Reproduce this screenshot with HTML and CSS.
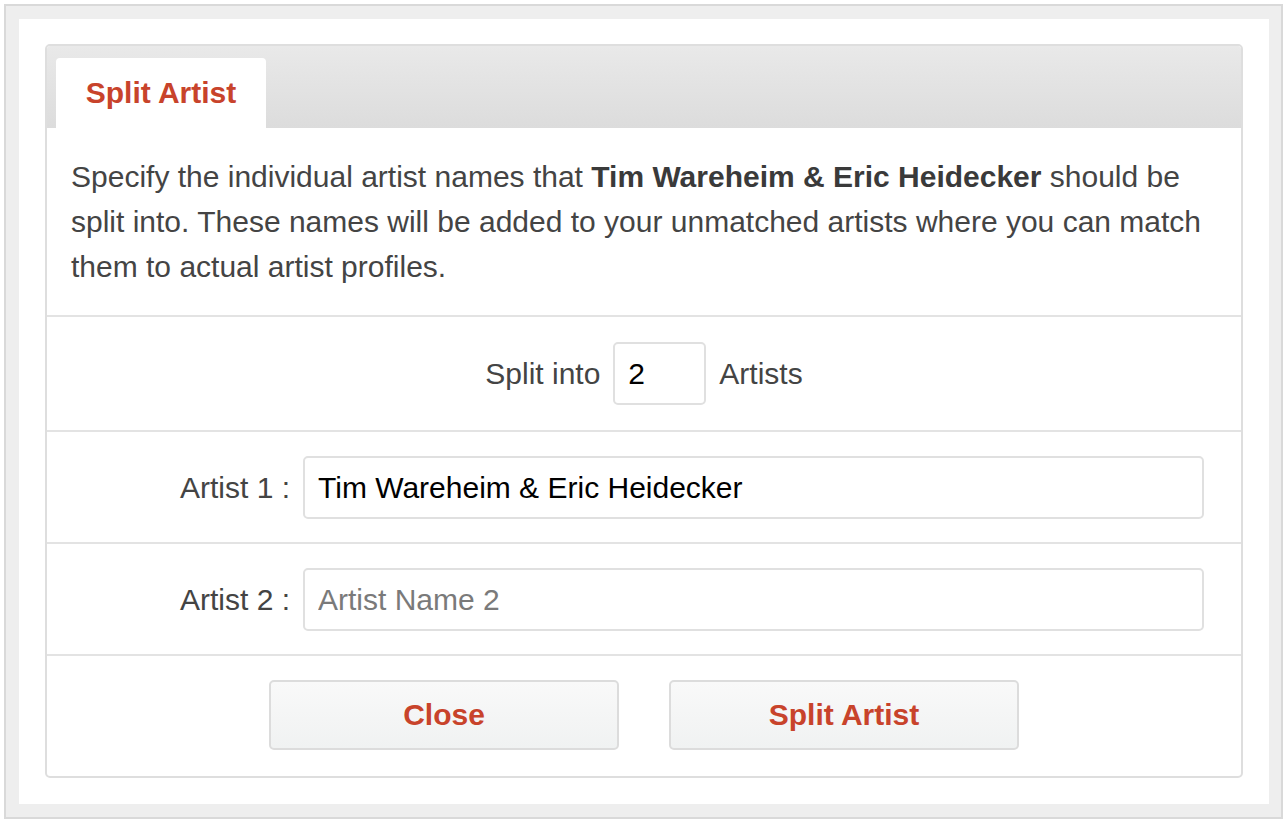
FILE: index.html
```html
<!DOCTYPE html>
<html lang="en">
<head>
<meta charset="utf-8">
<title>Split Artist</title>
<link rel="stylesheet" href="styles.css">
</head>
<body>
<div class="frame">
  <div class="sheet">
    <div class="card">
      <div class="card-head">
        <div class="tab">Split Artist</div>
      </div>
      <div class="intro">
        Specify the individual artist names that <b>Tim Wareheim &amp; Eric Heidecker</b> should be split into. These names will be added to your unmatched artists where you can match them to actual artist profiles.
      </div>
      <div class="split-row">
        <span class="split-label">Split into</span>
        <input class="count" type="text" value="2">
        <span class="split-label">Artists</span>
      </div>
      <div class="artist-row">
        <label class="artist-label">Artist 1 :</label>
        <input class="artist-input" type="text" value="Tim Wareheim &amp; Eric Heidecker">
      </div>
      <div class="artist-row">
        <label class="artist-label">Artist 2 :</label>
        <input class="artist-input" type="text" placeholder="Artist Name 2">
      </div>
      <div class="actions">
        <button class="btn" type="button">Close</button>
        <button class="btn" type="button">Split Artist</button>
      </div>
    </div>
  </div>
</div>
</body>
</html>
```
FILE: styles.css
```css
* { box-sizing: border-box; }
html, body { margin: 0; padding: 0; background: #fff; }
body {
  font-family: "Liberation Sans", Arial, Helvetica, sans-serif;
  color: #444;
  font-size: 30px;
}
.frame {
  margin: 4px;
  border: 2px solid #d9d9d9;
  background: #eeeeee;
  padding: 13px 12px 13px 13px;
}
.sheet {
  background: #fff;
  padding: 25px 26px 26px 26px;
}
.card {
  border: 2px solid #dedede;
  border-radius: 5px;
  overflow: hidden;
}
.card-head {
  height: 82px;
  background: linear-gradient(#e9e9e9, #dcdcdc);
  padding: 12px 0 0 9px;
  display: flex;
  align-items: flex-end;
}
.tab {
  height: 70px;
  width: 210px;
  background: #fff;
  border-radius: 4px 4px 0 0;
  color: #c8432b;
  font-weight: bold;
  display: flex;
  align-items: center;
  justify-content: center;
}
.intro {
  padding: 26px 24px 26px 24px;
  line-height: 45px;
  border-bottom: 2px solid #e3e3e3;
}
.intro b { color: #3a3a3a; }
.split-row {
  display: flex;
  justify-content: center;
  align-items: center;
  gap: 13px;
  padding: 25px 0;
  border-bottom: 2px solid #e3e3e3;
}
input {
  font-family: "Liberation Sans", Arial, Helvetica, sans-serif;
  font-size: 30px;
  color: #000;
  border: 2px solid #e0e0e0;
  border-radius: 5px;
  background: #fff;
  height: 63px;
  padding: 0 13px;
  outline: none;
}
input::placeholder { color: #7a7a7a; }
.count { width: 93px; }
.artist-row {
  display: flex;
  align-items: center;
  padding: 24px 0 23px 0;
  border-bottom: 2px solid #e3e3e3;
}
.artist-label {
  width: 256px;
  text-align: right;
  padding-right: 13px;
  color: #444;
}
.artist-input { width: 901px; }
.actions {
  display: flex;
  justify-content: center;
  gap: 50px;
  padding: 24px 0 26px 0;
}
.btn {
  width: 350px;
  height: 70px;
  border: 2px solid #dcdcdc;
  border-radius: 5px;
  background: linear-gradient(#f9f9f9, #f0f2f2);
  color: #c8432b;
  font-family: "Liberation Sans", Arial, Helvetica, sans-serif;
  font-weight: bold;
  font-size: 30px;
  cursor: pointer;
}
```
